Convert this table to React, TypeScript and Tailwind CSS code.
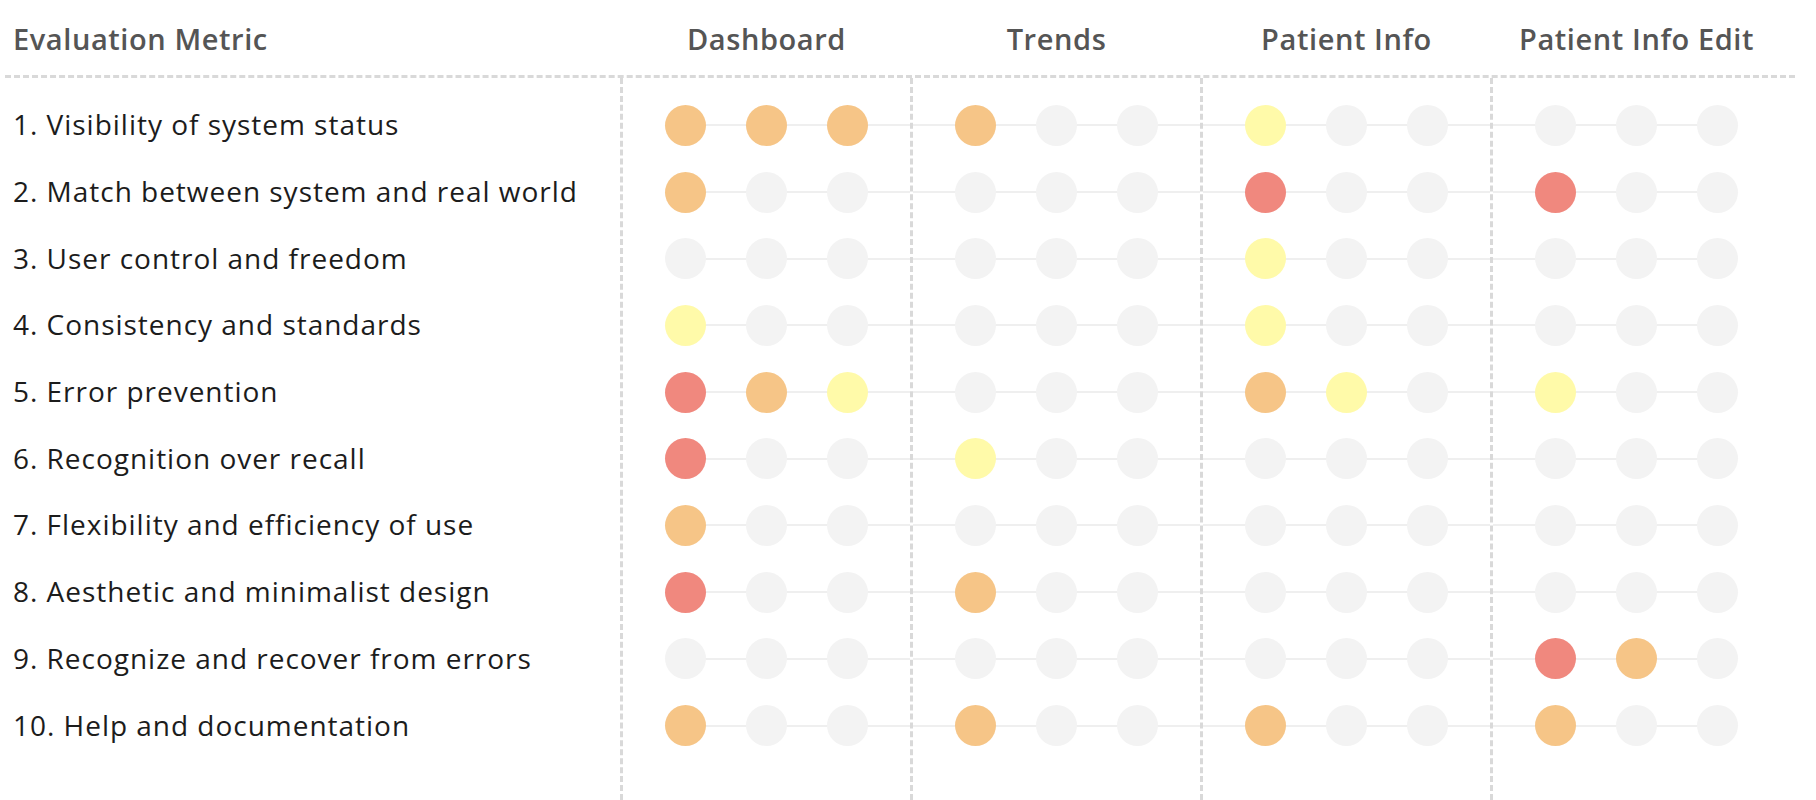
import React from 'react';

type Mark = 'O' | 'R' | 'Y' | 'G';

const groups = ['Dashboard', 'Trends', 'Patient Info', 'Patient Info Edit'];

const metrics: { label: string; marks: string[] }[] = [
  { label: '1. Visibility of system status', marks: ['OOO', 'OGG', 'YGG', 'GGG'] },
  { label: '2. Match between system and real world', marks: ['OGG', 'GGG', 'RGG', 'RGG'] },
  { label: '3. User control and freedom', marks: ['GGG', 'GGG', 'YGG', 'GGG'] },
  { label: '4. Consistency and standards', marks: ['YGG', 'GGG', 'YGG', 'GGG'] },
  { label: '5. Error prevention', marks: ['ROY', 'GGG', 'OYG', 'YGG'] },
  { label: '6. Recognition over recall', marks: ['RGG', 'YGG', 'GGG', 'GGG'] },
  { label: '7. Flexibility and efficiency of use', marks: ['OGG', 'GGG', 'GGG', 'GGG'] },
  { label: '8. Aesthetic and minimalist design', marks: ['RGG', 'OGG', 'GGG', 'GGG'] },
  { label: '9. Recognize and recover from errors', marks: ['GGG', 'GGG', 'GGG', 'ROG'] },
  { label: '10. Help and documentation', marks: ['OGG', 'OGG', 'OGG', 'OGG'] },
];

const dotColor: Record<Mark, string> = {
  O: 'bg-[#f6c587]',
  R: 'bg-[#f0887e]',
  Y: 'bg-[#fffaa9]',
  G: 'bg-[#f3f3f3]',
};

// connector line runs from the first dot of the first group to the last dot of the last group
const lineSpan = ['left-[62px] right-0', 'left-0 right-0', 'left-0 right-0', 'left-0 right-[62px]'];

export default function App() {
  return (
    <div className="min-h-screen bg-white flex flex-col px-[5px]" style={{ fontFamily: '"Open Sans", Lato, sans-serif' }}>
      <div className="w-[1790px] grid grid-cols-[615px_290px_290px_290px_290px_1fr] h-[78px] border-b-[3px] border-dashed border-[#d9d9d9] items-center text-[29px] font-semibold text-[#555555] tracking-[0.02em]">
        <div className="pl-[8px] pt-[3px]">Evaluation Metric</div>
        {groups.map((g) => (
          <div key={g} className="text-center pt-[3px] pl-[3px] whitespace-nowrap">
            {g}
          </div>
        ))}
        <div />
      </div>

      <div className="flex-1 w-[1790px] grid grid-cols-[615px_290px_290px_290px_290px_1fr]">
        <div className="flex flex-col pt-[14px]">
          {metrics.map((m) => (
            <div key={m.label} className="h-[66.7px] flex items-center pl-[8px] pb-[2px] text-[28px] text-[#1c1c1c] tracking-[0.035em] whitespace-nowrap">
              {m.label}
            </div>
          ))}
        </div>

        {groups.map((g, gi) => (
          <div key={g} className="flex flex-col pt-[14px] border-l-[3px] border-dashed border-[#d9d9d9]">
            {metrics.map((m) => (
              <div key={m.label} className="relative h-[66.7px] flex items-center pl-[42px] gap-[40px]">
                <div className={`absolute top-1/2 -translate-y-1/2 h-[2px] bg-[#efefef] ${lineSpan[gi]}`} />
                {m.marks[gi].split('').map((c, i) => (
                  <div key={i} className={`relative w-[41px] h-[41px] rounded-full ${dotColor[c as Mark]}`} />
                ))}
              </div>
            ))}
          </div>
        ))}
        <div />
      </div>
    </div>
  );
}
